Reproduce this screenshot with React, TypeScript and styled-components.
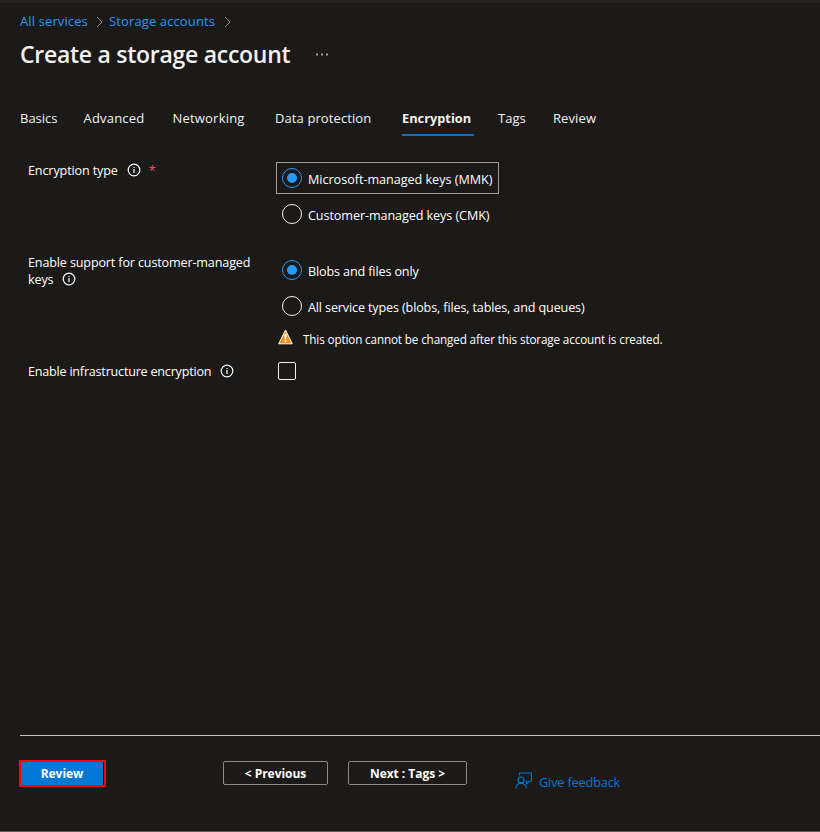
import React from "react";
import styled, { createGlobalStyle } from "styled-components";

const GlobalStyle = createGlobalStyle`
  * { box-sizing: border-box; }
  body { margin: 0; background: #1b1a19; }
`;

const Page = styled.div`
  height: 832px;
  display: flex;
  flex-direction: column;
  overflow: hidden;
  border-top: 3px solid #252423;
  border-bottom: 1px solid #605e5c;
  background: #1b1a19;
  color: #fff;
  font: 400 12.6px/18px "Open Sans", "Noto Sans", sans-serif;
  white-space: nowrap;
`;

const Breadcrumb = styled.nav`
  display: flex;
  align-items: center;
  height: 18px;
  margin: 9px 0 0 20px;
`;

const Crumb = styled.a<{ $width: number }>`
  width: ${(p) => p.$width}px;
  color: #2899f5;
  font-size: 13px;
  letter-spacing: 0.12px;
`;

const CrumbArrow = styled.svg`
  width: 7px;
  height: 12px;
  margin: 1px 6px 0 7px;
  fill: none;
  stroke: #8a8886;
`;

const TitleRow = styled.header`
  display: flex;
  align-items: center;
  height: 32px;
  margin: 8px 0 0 20px;
`;

const Title = styled.h1`
  width: 296px;
  margin: 0;
  color: #f3f2f1;
  font-size: 23px;
  font-weight: 600;
  line-height: 32px;
  letter-spacing: -0.27px;
`;

const More = styled.svg`
  width: 12px;
  height: 3px;
  fill: #a19f9d;
`;

const Tabs = styled.div`
  display: flex;
  height: 28px;
  margin: 38px 0 0 20px;
`;

const Tab = styled.div<{ $width: number; $gap: number; $active?: boolean; $track?: number }>`
  width: ${(p) => p.$width}px;
  margin-right: ${(p) => p.$gap}px;
  padding-top: 1px;
  border-bottom: 2px solid ${(p) => (p.$active ? "#106ebe" : "transparent")};
  color: #f3f2f1;
  font-size: ${(p) => (p.$active ? 12.8 : 13)}px;
  font-weight: ${(p) => (p.$active ? 700 : 400)};
  letter-spacing: ${(p) => p.$track ?? 0}px;
`;

const Form = styled.main`
  display: grid;
  grid-template-columns: 248px 1fr;
  grid-template-rows: 92px 108px 24px;
  flex: 1;
  align-content: start;
  padding: 26px 0 0 28px;
`;

const Label = styled.div<{ $top?: number; $track: number }>`
  padding-top: ${(p) => p.$top ?? 0}px;
  line-height: 17px;
  letter-spacing: ${(p) => p.$track}px;
`;

const LabelLine = styled.div`
  display: flex;
  align-items: center;
  height: 17px;
`;

const Info = styled.svg`
  width: 14px;
  height: 14px;
  margin: -1px 0 0 9px;
  flex: none;
`;

const Required = styled.span`
  margin-left: 8px;
  color: #f1545b;
`;

const Options = styled.div`
  display: flex;
  flex-direction: column;
  align-items: flex-start;
  gap: 4px;
`;

const Option = styled.label<{ $focused?: boolean; $track?: number }>`
  display: flex;
  align-items: center;
  height: 32px;
  padding: 0 5px;
  border: 1px solid ${(p) => (p.$focused ? "#a19f9d" : "transparent")};
  width: ${(p) => (p.$focused ? "223px" : "auto")};
  letter-spacing: ${(p) => p.$track ?? 0}px;
`;

const OptionText = styled.span`
  margin: 3px 0 0 6px;
`;

const Radio = styled.span<{ $on?: boolean }>`
  display: flex;
  align-items: center;
  justify-content: center;
  width: 20px;
  height: 20px;
  flex: none;
  border: 1px solid ${(p) => (p.$on ? "#2899f5" : "#f3f2f1")};
  border-radius: 50%;
  &::after {
    content: "";
    width: 10px;
    height: 10px;
    border-radius: 50%;
    background: ${(p) => (p.$on ? "#2899f5" : "transparent")};
  }
`;

const Warning = styled.div`
  display: flex;
  align-items: center;
  height: 18px;
  margin-top: 4px;
  padding-left: 2px;
  font-size: 11.7px;
  letter-spacing: -0.135px;
`;

const WarningIcon = styled.svg`
  width: 15px;
  height: 16px;
  margin: -4px 10px 0 0;
`;

const Checkbox = styled.span`
  width: 18px;
  height: 18px;
  margin: 0 0 0 2px;
  border: 1px solid #f3f2f1;
  border-radius: 2px;
`;

const Footer = styled.footer`
  display: flex;
  align-items: flex-start;
  height: 96px;
  margin-left: 19px;
  padding-top: 25px;
  background: linear-gradient(#c8c6c4, #c8c6c4) 1px 0 / 100% 1px no-repeat;
`;

const ReviewFrame = styled.div`
  width: 87px;
  height: 27px;
  margin-right: 117px;
  border: 2px solid #f00;
`;

const Button = styled.button<{ $width: number; $primary?: boolean }>`
  display: flex;
  align-items: center;
  justify-content: center;
  width: ${(p) => p.$width}px;
  height: ${(p) => (p.$primary ? 23 : 24)}px;
  margin: ${(p) => (p.$primary ? "0" : "1px 20px 0 0")};
  padding: 1px 0 0;
  border: ${(p) => (p.$primary ? "0" : "1px solid #8a8886")};
  border-radius: ${(p) => (p.$primary ? 0 : 2)}px;
  background: ${(p) => (p.$primary ? "#0078d4" : "transparent")};
  color: #fff;
  font: 700 12px/18px "Open Sans", "Noto Sans", sans-serif;
  letter-spacing: -0.03px;
  white-space: pre;
`;

const Feedback = styled.a`
  display: flex;
  align-items: center;
  gap: 7px;
  height: 18px;
  margin: 13px 0 0 28px;
  color: #0078d4;
  font-size: 12.8px;
  letter-spacing: -0.2px;
`;

const FeedbackIcon = styled.svg`
  width: 17px;
  height: 17px;
  margin-top: -3px;
  fill: none;
  stroke: #0078d4;
  stroke-width: 1.1;
`;

const Arrow = () => (
  <CrumbArrow viewBox="0 0 7 12">
    <path d="M1 1l5 5-5 5" />
  </CrumbArrow>
);

const InfoIcon = () => (
  <Info viewBox="0 0 14 14">
    <circle cx="7" cy="7" r="5.8" fill="none" stroke="#fff" strokeWidth="1.2" />
    <path d="M6.4 6h1.2v4H6.4zM6.4 3.9h1.2v1.2H6.4z" fill="#fff" />
  </Info>
);

export default function App() {
  return (
    <>
      <GlobalStyle />
      <Page>
        <Breadcrumb>
          <Crumb $width={69}>All services</Crumb>
          <Arrow />
          <Crumb $width={108}>Storage accounts</Crumb>
          <Arrow />
        </Breadcrumb>
        <TitleRow>
          <Title>Create a storage account</Title>
          <More viewBox="0 0 12 3">
            <path d="M0 .5h2v2H0zM5 .5h2v2H5zM10 .5h2v2h-2z" />
          </More>
        </TitleRow>
        <Tabs>
          <Tab $width={37} $gap={26.5}>Basics</Tab>
          <Tab $width={62} $gap={27} $track={0.2}>Advanced</Tab>
          <Tab $width={73} $gap={29.5} $track={0.2}>Networking</Tab>
          <Tab $width={97} $gap={30} $track={0.1}>Data protection</Tab>
          <Tab $width={72} $gap={24} $active>Encryption</Tab>
          <Tab $width={28} $gap={27}>Tags</Tab>
          <Tab $width={44} $gap={0} $track={0.1}>Review</Tab>
        </Tabs>
        <Form>
          <Label $track={-0.13}>
            <LabelLine>Encryption type<InfoIcon /><Required>*</Required></LabelLine>
          </Label>
          <Options>
            <Option $focused $track={-0.02}><Radio $on /><OptionText>Microsoft-managed keys (MMK)</OptionText></Option>
            <Option $track={-0.08}><Radio /><OptionText>Customer-managed keys (CMK)</OptionText></Option>
          </Options>
          <Label $track={-0.15}>
            <LabelLine>Enable support for customer-managed</LabelLine>
            <LabelLine>keys<InfoIcon /></LabelLine>
          </Label>
          <Options>
            <Option $track={-0.13}><Radio $on /><OptionText>Blobs and files only</OptionText></Option>
            <Option $track={-0.14}><Radio /><OptionText>All service types (blobs, files, tables, and queues)</OptionText></Option>
            <Warning>
              <WarningIcon viewBox="0 0 15 16">
                <path d="M7.5 1L14.3 14.8H.7z" fill="#ff8c00" stroke="#fff" strokeLinejoin="round" />
                <path d="M6.3 5h2.4l-.5 5.4H6.8zM6.5 11.3h2v1.8h-2z" fill="#fff" />
              </WarningIcon>
              This option cannot be changed after this storage account is created.
            </Warning>
          </Options>
          <Label $top={1} $track={-0.22}>
            <LabelLine>Enable infrastructure encryption<InfoIcon /></LabelLine>
          </Label>
          <Checkbox />
        </Form>
        <Footer>
          <ReviewFrame><Button $width={82} $primary>Review</Button></ReviewFrame>
          <Button $width={105}>{"< Previous"}</Button>
          <Button $width={119}>{"Next : Tags >"}</Button>
          <Feedback>
            <FeedbackIcon viewBox="0 0 17 17">
              <circle cx="6" cy="8" r="3" />
              <path d="M.8 16.5c0-3 2.2-5.4 5.2-5.4s5.2 2.4 5.2 5.4M4.6 3.5V1h11.8v8.3h-2.3l-2.5 2.4V9.3h-1.3" />
            </FeedbackIcon>
            Give feedback
          </Feedback>
        </Footer>
      </Page>
    </>
  );
}
